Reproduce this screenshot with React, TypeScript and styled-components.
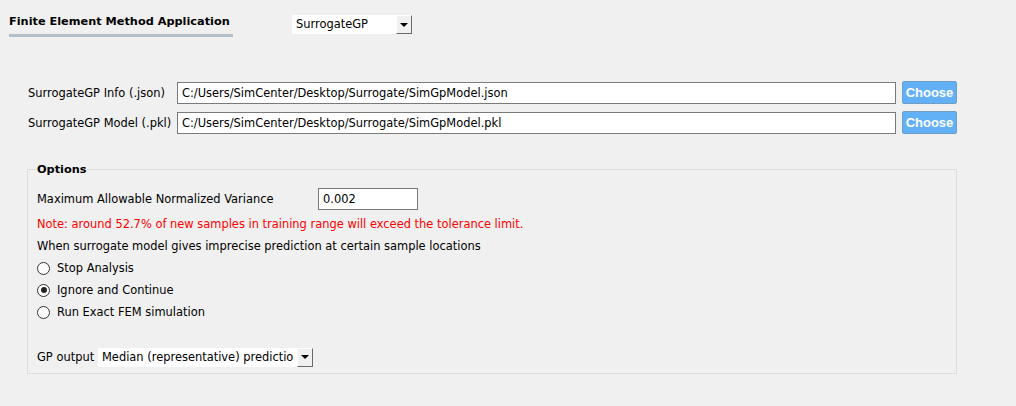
import React, { useState } from 'react'
import styled, { createGlobalStyle } from 'styled-components'

const GlobalStyle = createGlobalStyle`
  body {
    margin: 0;
    background: #f0f0f0;
    font-family: 'DejaVu Sans', Verdana, sans-serif;
    font-size: 11.45px;
    color: #000;
  }
`

const Page = styled.div`
  width: 1016px;
  height: 406px;
  box-sizing: border-box;
  padding-top: 11px;
`

const Header = styled.div`
  display: flex;
  align-items: flex-start;
`

const TitleTab = styled.div`
  margin-left: 9px;
  width: 224px;
  height: 20px;
  font-weight: bold;
  font-size: 11.3px;
  line-height: 16px;
  padding-top: 3px;
  white-space: nowrap;
  border-bottom: 3px solid #b4c0c8;
`

const Combo = styled.div<{ width: number }>`
  display: flex;
  align-items: stretch;
  width: ${(p) => p.width}px;
  height: 19px;
  background: #fff;
  box-sizing: border-box;
`

const ComboText = styled.div`
  flex: 1;
  padding-left: 4px;
  line-height: 19px;
  white-space: nowrap;
  overflow: hidden;
`

const ComboArrow = styled.div`
  width: 16px;
  flex-shrink: 0;
  box-sizing: border-box;
  background: #f0f0f0;
  border-top: 1px solid #fff;
  border-left: 1px solid #fff;
  border-right: 1px solid #696969;
  border-bottom: 1px solid #696969;
  display: flex;
  align-items: center;
  justify-content: center;

  &::after {
    content: '';
    border-left: 4px solid transparent;
    border-right: 4px solid transparent;
    border-top: 4px solid #000;
  }
`

const HeaderCombo = styled.div`
  margin-left: 59px;
  margin-top: 4px;
`

const Files = styled.div`
  margin-top: 44px;
  padding-left: 28px;
  padding-right: 59px;
  display: flex;
  flex-direction: column;
  gap: 8px;
`

const FileRow = styled.div`
  display: grid;
  grid-template-columns: 143px 1fr 55px;
  column-gap: 6px;
  align-items: center;
  height: 22px;
  white-space: nowrap;
`

const TextBox = styled.div<{ width?: number }>`
  height: 22px;
  box-sizing: border-box;
  background: #fff;
  border: 1px solid #7a7a7a;
  padding-left: 4px;
  line-height: 20px;
  white-space: nowrap;
  overflow: hidden;
  ${(p) => (p.width ? `width: ${p.width}px;` : '')}
`

const ChooseButton = styled.div`
  height: 23px;
  box-sizing: border-box;
  background: #62b1f6;
  border: 1px solid #6f9ec4;
  border-radius: 2px;
  color: #fff;
  font-family: 'Liberation Sans', Arial, sans-serif;
  font-weight: bold;
  font-size: 13px;
  line-height: 21px;
  text-align: center;
`

const Group = styled.fieldset`
  margin: 30px 59px 0 27px;
  padding: 12px 9px 5px 9px;
  border: 1px solid #dcdcdc;
  border-radius: 0;
  display: flex;
  flex-direction: column;
`

const Legend = styled.legend`
  padding: 0;
  margin-left: 0;
  font-weight: bold;
  font-size: 11.3px;
`

const Row = styled.div<{ top?: number }>`
  display: flex;
  align-items: center;
  height: 22px;
  white-space: nowrap;
  margin-top: ${(p) => p.top ?? 0}px;
`

const VarianceLabel = styled.div`
  width: 281px;
`

const Note = styled(Row)`
  color: #ff0000;
`

const RadioRow = styled.label`
  display: flex;
  align-items: center;
  gap: 7px;
  height: 22px;
  cursor: default;
`

const RadioCircle = styled.span<{ checked: boolean }>`
  width: 13px;
  height: 13px;
  box-sizing: border-box;
  border-radius: 50%;
  border: 1px solid #333;
  background: #fff;
  display: flex;
  align-items: center;
  justify-content: center;

  &::after {
    content: '';
    width: 6px;
    height: 6px;
    border-radius: 50%;
    background: ${(p) => (p.checked ? '#222' : 'transparent')};
  }
`

const OutputLabel = styled.div`
  width: 61px;
`

const options = ['Stop Analysis', 'Ignore and Continue', 'Run Exact FEM simulation']

export default function App() {
  const [choice, setChoice] = useState(1)

  return (
    <Page>
      <GlobalStyle />
      <Header>
        <TitleTab>Finite Element Method Application</TitleTab>
        <HeaderCombo>
          <Combo width={120}>
            <ComboText>SurrogateGP</ComboText>
            <ComboArrow />
          </Combo>
        </HeaderCombo>
      </Header>

      <Files>
        <FileRow>
          <span>SurrogateGP Info (.json)</span>
          <TextBox>C:/Users/SimCenter/Desktop/Surrogate/SimGpModel.json</TextBox>
          <ChooseButton>Choose</ChooseButton>
        </FileRow>
        <FileRow>
          <span>SurrogateGP Model (.pkl)</span>
          <TextBox>C:/Users/SimCenter/Desktop/Surrogate/SimGpModel.pkl</TextBox>
          <ChooseButton>Choose</ChooseButton>
        </FileRow>
      </Files>

      <Group>
        <Legend>Options</Legend>
        <Row>
          <VarianceLabel>Maximum Allowable Normalized Variance</VarianceLabel>
          <TextBox width={100}>0.002</TextBox>
        </Row>
        <Note top={3}>
          Note: around 52.7% of new samples in training range will exceed the tolerance limit.
        </Note>
        <Row>When surrogate model gives imprecise prediction at certain sample locations</Row>
        {options.map((o, i) => (
          <RadioRow key={o} onClick={() => setChoice(i)}>
            <RadioCircle checked={choice === i} />
            {o}
          </RadioRow>
        ))}
        <Row top={23}>
          <OutputLabel>GP output</OutputLabel>
          <Combo width={215}>
            <ComboText>Median (representative) predictio</ComboText>
            <ComboArrow />
          </Combo>
        </Row>
      </Group>
    </Page>
  )
}
